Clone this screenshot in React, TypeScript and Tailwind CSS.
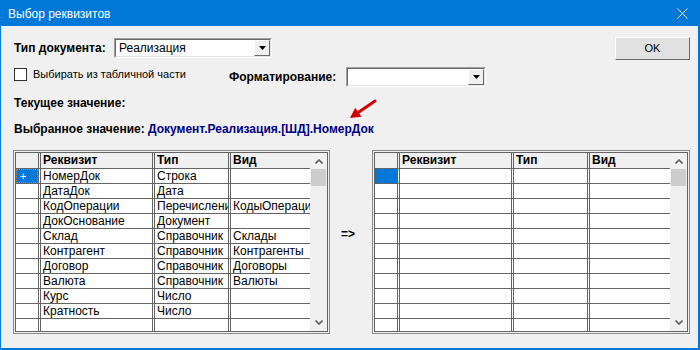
import React from "react";

const leftRows: [string, string, string][] = [
  ["НомерДок", "Строка", ""],
  ["ДатаДок", "Дата", ""],
  ["КодОперации", "Перечисление", "КодыОперацийКонтрагентов"],
  ["ДокОснование", "Документ", ""],
  ["Склад", "Справочник", "Склады"],
  ["Контрагент", "Справочник", "Контрагенты"],
  ["Договор", "Справочник", "Договоры"],
  ["Валюта", "Справочник", "Валюты"],
  ["Курс", "Число", ""],
  ["Кратность", "Число", ""],
  ["", "", ""],
];

const emptyRows: [string, string, string][] = Array.from({ length: 11 }, () => ["", "", ""]);

function Chevron({ up }: { up: boolean }) {
  return (
    <svg width="8" height="5" viewBox="0 0 8 5">
      {up ? (
        <path d="M0.5 4.5 L4 1 L7.5 4.5" fill="none" stroke="#606060" strokeWidth="1.6" />
      ) : (
        <path d="M0.5 0.5 L4 4 L7.5 0.5" fill="none" stroke="#606060" strokeWidth="1.6" />
      )}
    </svg>
  );
}

function Grid({ rows, focus, width }: { rows: [string, string, string][]; focus: boolean; width: string }) {
  return (
    <div className={`${width} h-[184px] border border-[#8a8a8a] p-px bg-[#f0f0f0]`}>
      <div className="h-full border border-[#646464] flex bg-white">
        <div className="flex-1 flex flex-col overflow-hidden">
          <div className="h-[16px] shrink-0 flex border-b border-[#646464] bg-[#f0f0f0] font-bold text-[12px] leading-[15px]">
            <div className="w-[25px] shrink-0 border-r-[3px] border-double border-[#646464]" />
            <div className="w-[114px] shrink-0 border-r-[3px] border-double border-[#646464] pl-[2px]">Реквизит</div>
            <div className="w-[76px] shrink-0 border-r-[3px] border-double border-[#646464] pl-[2px]">Тип</div>
            <div className="flex-1 pl-[2px]">Вид</div>
          </div>
          {rows.map((r, i) => (
            <div key={i} className="h-[15px] shrink-0 flex border-b border-[#646464] text-[12px] leading-[14px]">
              <div className="w-[25px] shrink-0 border-r-[3px] border-double border-[#646464]">
                {i === 0 ? (
                  focus ? (
                    <div className="h-full w-full bg-[#0078d7] border border-dotted border-[#d08030] text-white text-[11px] leading-[12px] pl-[3px]">+</div>
                  ) : (
                    <div className="h-full w-full bg-[#0078d7]" />
                  )
                ) : null}
              </div>
              <div className="w-[114px] shrink-0 border-r-[3px] border-double border-[#646464] pl-[2px] overflow-hidden whitespace-nowrap">{r[0]}</div>
              <div className="w-[76px] shrink-0 border-r-[3px] border-double border-[#646464] pl-[2px] overflow-hidden whitespace-nowrap">{r[1]}</div>
              <div className="flex-1 pl-[2px] overflow-hidden whitespace-nowrap">{r[2]}</div>
            </div>
          ))}
        </div>
        <div className="w-[17px] shrink-0 bg-[#f0f0f0] flex flex-col items-center">
          <div className="h-[16px] flex items-center justify-center pt-px">
            <Chevron up />
          </div>
          <div className="w-[15px] h-[17px] bg-[#cdcdcd]" />
          <div className="flex-1" />
          <div className="h-[16px] flex items-center justify-center pb-[2px]">
            <Chevron up={false} />
          </div>
        </div>
      </div>
    </div>
  );
}

function Combo({ width, text }: { width: string; text: string }) {
  return (
    <div className={`${width} h-[20px] border border-t-[#a0a0a0] border-l-[#a0a0a0] border-b-white border-r-white`}>
      <div className="h-full border border-t-[#696969] border-l-[#696969] border-b-[#e3e3e3] border-r-[#e3e3e3] bg-white flex">
        <div className="flex-1 pl-[3px] text-[12px] leading-[16px] whitespace-nowrap overflow-hidden">{text}</div>
        <div className="w-[16px] h-full border border-t-white border-l-white border-b-[#696969] border-r-[#696969] bg-[#f0f0f0] flex items-center justify-center">
          <svg width="7" height="4" viewBox="0 0 7 4">
            <path d="M0 0 H7 L3.5 4 Z" fill="#000" />
          </svg>
        </div>
      </div>
    </div>
  );
}

export default function App() {
  return (
    <div className="w-[700px] h-[350px] bg-[#0078d7] flex flex-col font-['Liberation_Sans',Arial,sans-serif] text-black">
      <div className="h-[26px] shrink-0 flex items-center justify-between pl-[8px] pr-[12px] pt-px">
        <span className="text-white text-[12px] leading-[14px]">Выбор реквизитов</span>
        <svg width="11" height="11" viewBox="0 0 11 11">
          <path d="M0.5 0.5 L10.5 10.5 M10.5 0.5 L0.5 10.5" stroke="#fff" strokeWidth="1" />
        </svg>
      </div>
      <div className="relative flex-1 ml-px mr-[2px] mb-[2px] bg-[#f0f0f0] pt-[11px]">
        {/* row 1 */}
        <div className="h-[23px] flex items-start pl-[13px] pr-[8px]">
          <div className="w-[100px] shrink-0 text-[12px] font-bold leading-[20px] mt-px">Тип документа:</div>
          <div className="mt-px">
            <Combo width="w-[158px]" text="Реализация" />
          </div>
          <div className="ml-auto w-[75px] h-[23px] border border-t-white border-l-white border-b-[#696969] border-r-[#696969] bg-[#e1e1e1] flex items-center justify-center text-[11px]">
            OK
          </div>
        </div>
        {/* row 2 */}
        <div className="mt-[7px] h-[20px] flex items-start pl-[13px]">
          <div className="w-[13px] h-[13px] mt-px border border-[#333] bg-white shrink-0" />
          <div className="ml-[6px] w-[196px] shrink-0 text-[11px] leading-[14px]">Выбирать из табличной части</div>
          <div className="w-[117px] shrink-0 text-[12px] font-bold leading-[20px]">Форматирование:</div>
          <Combo width="w-[140px]" text="" />
        </div>
        {/* row 3 */}
        <div className="mt-[10px] h-[13px] pl-[13px] text-[12px] font-bold leading-[13px]">Текущее значение:</div>
        {/* row 4 */}
        <div className="mt-[13px] h-[13px] pl-[13px] flex text-[12px] font-bold leading-[13px]">
          <div className="w-[134px] shrink-0">Выбранное значение:</div>
          <div className="text-[#000080]">Документ.Реализация.[ШД].НомерДок</div>
        </div>
        {/* grids */}
        <div className="mt-[14px] pl-[12px] flex items-start">
          <Grid rows={leftRows} focus width="w-[317px]" />
          <div className="w-[42px] shrink-0 pl-[11px] mt-[78px] text-[12px] font-bold leading-[13px]">=&gt;</div>
          <Grid rows={emptyRows} focus={false} width="w-[318px]" />
        </div>
        {/* red arrow */}
        <svg className="absolute left-[344px] top-[70px]" width="36" height="26" viewBox="0 0 36 26">
          <path d="M30 5 L13.5 16.2" stroke="#d00000" strokeWidth="3" strokeLinecap="round" />
          <path d="M5 22 L16.5 20.8 L10.2 11.8 Z" fill="#d00000" />
        </svg>
      </div>
    </div>
  );
}
